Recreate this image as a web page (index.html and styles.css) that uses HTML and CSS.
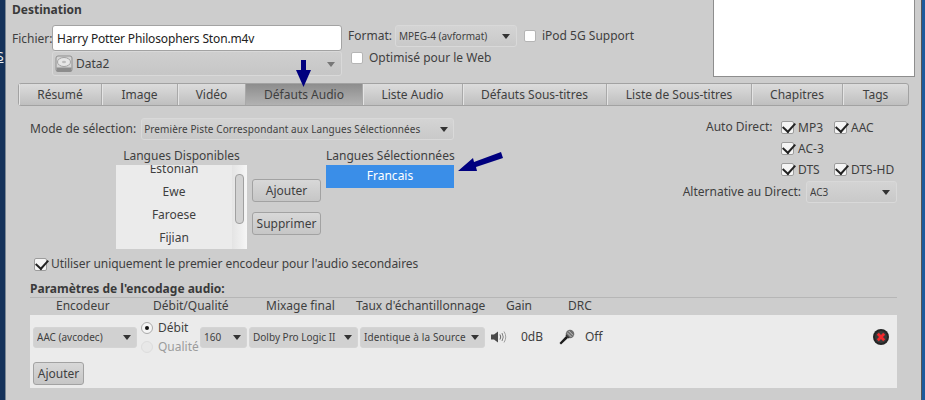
FILE: index.html
```html
<!DOCTYPE html>
<html lang="en">
<head>
	<meta charset="UTF-8">
	<title>Destination</title>
	<link rel="stylesheet" href="styles.css">
</head>
<body>
	<div class="desk"><span class="desk-s">S</span></div>
	<div class="win">
		<div class="top">
			<div class="dest">
				<div class="heading">Destination</div>
				<div class="dest-rows">
					<div class="file-col">
						<div class="file-row">
							<label class="file-lbl">Fichier:</label>
							<div class="entry">Harry Potter Philosophers Ston.m4v</div>
						</div>
						<div class="combo disk">
							<svg class="disk-ico" width="18" height="18" viewBox="0 0 18 18">
								<rect x="1" y="1" width="16" height="15.500" rx="2" fill="#d4d4d4" stroke="#8f8f8f"/>
								<ellipse cx="9" cy="7" rx="6.500" ry="4.500" fill="#e6e6e6" stroke="#a2a2a2"/>
								<ellipse cx="9" cy="7" rx="2" ry="1.300" fill="#bcbcbc"/>
								<rect x="1.500" y="12.500" width="15" height="4" fill="#8c8c8c"/>
							</svg>
							<span class="grow">Data2</span>
							<i class="caret light"></i>
						</div>
					</div>
					<div class="format-col">
						<div class="format-row">
							<span>Format:</span>
							<div class="combo format"><span class="grow">MPEG-4 (avformat)</span><i class="caret"></i></div>
							<span class="check"><i class="box"></i>iPod 5G Support</span>
						</div>
						<span class="check web"><i class="box"></i>Optimisé pour le Web</span>
					</div>
				</div>
			</div>
			<div class="preview"></div>
		</div>

		<div class="tabs">
			<div class="tab t1">Résumé</div>
			<div class="tab t2">Image</div>
			<div class="tab t3">Vidéo</div>
			<div class="tab t4 on">Défauts Audio</div>
			<div class="tab t5">Liste Audio</div>
			<div class="tab t6">Défauts Sous-titres</div>
			<div class="tab t7">Liste de Sous-titres</div>
			<div class="tab t8">Chapitres</div>
			<div class="tab t9">Tags</div>
		</div>

		<div class="middle">
			<div class="left">
				<div class="mode">
					<span>Mode de sélection:</span>
					<div class="combo mode-combo"><span class="grow">Première Piste Correspondant aux Langues Sélectionnées</span><i class="caret"></i></div>
				</div>
				<div class="langs">
					<div class="avail">
						<div class="lang-head">Langues Disponibles</div>
						<div class="list">
							<div class="list-items">
								<div class="cut">Estonian</div>
								<div>Ewe</div>
								<div>Faroese</div>
								<div>Fijian</div>
							</div>
							<div class="scroll"><i></i></div>
						</div>
					</div>
					<div class="lang-btns">
						<div class="btn add">Ajouter</div>
						<div class="btn del">Supprimer</div>
					</div>
					<div class="chosen">
						<div class="lang-head">Langues Sélectionnées</div>
						<div class="sel">Francais</div>
					</div>
				</div>
			</div>
			<div class="right">
				<div class="auto">
					<span class="auto-lbl">Auto Direct:</span>
					<div class="auto-grid">
						<span class="check"><i class="box ticked"></i>MP3</span>
						<span class="check"><i class="box ticked"></i>AAC</span>
						<span class="check wide"><i class="box ticked"></i>AC-3</span>
						<span class="check"><i class="box ticked"></i>DTS</span>
						<span class="check"><i class="box ticked"></i>DTS-HD</span>
					</div>
				</div>
				<div class="fallback">
					<span>Alternative au Direct:</span>
					<div class="combo ac3"><span class="grow">AC3</span><i class="caret"></i></div>
				</div>
			</div>
		</div>

		<div class="check only"><i class="box ticked"></i>Utiliser uniquement le premier encodeur pour l'audio secondaires</div>

		<div class="params">
			<div class="heading params-head">Paramètres de l'encodage audio:</div>
			<div class="cols">
				<span class="c1">Encodeur</span>
				<span class="c2">Débit/Qualité</span>
				<span class="c3">Mixage final</span>
				<span class="c4">Taux d'échantillonnage</span>
				<span class="c5">Gain</span>
				<span class="c6">DRC</span>
			</div>
			<div class="panel">
				<div class="track">
					<div class="combo flat w-enc"><span class="grow">AAC (avcodec)</span><i class="caret"></i></div>
					<div class="radios">
						<span class="radio"><i class="dot on-dot"></i>Débit</span>
						<span class="radio off"><i class="dot"></i>Qualité</span>
					</div>
					<div class="combo flat w-rate"><span class="grow">160</span><i class="caret"></i></div>
					<div class="combo flat w-mix"><span class="grow">Dolby Pro Logic II</span><i class="caret"></i></div>
					<div class="combo flat w-samp"><span class="grow">Identique à la Source</span><i class="caret"></i></div>
					<svg class="vol" width="16" height="14" viewBox="0 0 16 14">
						<path d="M0 4.500h3L7 1.500v11L3 9.500H0z" fill="#4a4a4a"/>
						<path d="M9 4.500q1.500 2.500 0 5" fill="none" stroke="#666" stroke-width="1"/>
						<path d="M11 3q2.500 4 0 8" fill="none" stroke="#808080" stroke-width="1"/>
						<path d="M13 1.500q3.500 5.500 0 11" fill="none" stroke="#a0a0a0" stroke-width="1"/>
					</svg>
					<span class="gain">0dB</span>
					<svg class="mic" width="16" height="16" viewBox="0 0 16 16">
						<path d="M.5 14L7.500 6.500 9.500 8.500 2 15.500z" fill="#1c1c1c"/>
						<circle cx="11" cy="5" r="4.300" fill="#6e6e6e"/>
						<path d="M8 3.500l4.500 4.500M9.500 1.800l4.700 4.700" stroke="#c4c4c4" stroke-width="1"/>
						<path d="M7 6l3 3" stroke="#333" stroke-width="1.500"/>
					</svg>
					<span class="drc">Off</span>
					<svg class="remove" width="16" height="16" viewBox="0 0 16 16">
						<circle cx="8" cy="8" r="8" fill="#242424"/>
						<circle cx="8" cy="8" r="6" fill="#3a3a3a"/>
						<path d="M4.800 4.800l6.400 6.400M11.200 4.800l-6.400 6.400" stroke="#f4282c" stroke-width="2.800"/>
					</svg>
				</div>
				<div class="btn add-track">Ajouter</div>
			</div>
		</div>

		<!-- annotation arrows drawn over the screenshot -->
		<svg class="arrow-down" width="15" height="27" viewBox="0 0 15 27">
			<path d="M5 0h5v10h5L7.500 27 0 10h5z" fill="#00007f"/>
		</svg>
		<svg class="arrow-side" width="45" height="20" viewBox="0 0 45 20">
			<path d="M0 19L15 6l1 4L43 0l2 6-27 9 1 4z" fill="#00007f"/>
		</svg>
	</div>
	<div class="edge"></div>
</body>
</html>
```

FILE: styles.css
```css
*{margin:0;padding:0;box-sizing:border-box;}
body{
	width:925px;
	height:400px;
	overflow:hidden;
	display:flex;
	background:#cdcdcd;
	font-family:"Noto Sans",sans-serif;
	font-size:12px;
	line-height:16px;
	color:#3f3f3f;
}
.desk{
	width:6px;
	background:#14325a;
	border-right:1px solid #7a8794;
	overflow:hidden;
	position:relative;
}
.desk-s{
	position:absolute;
	left:-3px;
	top:49px;
	color:#eee;
	font-size:12px;
	text-decoration:underline;
}
.edge{
	width:4px;
	background:#1d5a9c;
	border-left:1px solid #555;
}
.win{
	width:915px;
	position:relative;
	display:flex;
	flex-direction:column;
}
.grow{flex:1;white-space:nowrap;overflow:hidden;}
.heading{
	font-weight:700;
	color:#3a3a3a;
}

/* top */
.top{
	height:83px;
	display:flex;
}
.dest{
	width:708px;
	padding-left:6px;
	padding-top:2px;
}
.dest-rows{
	display:flex;
	margin-top:7px;
}
.file-col{
	width:331px;
}
.file-row{
	display:flex;
	align-items:center;
}
.file-lbl{width:41px;padding-top:1px;}
.entry{
	width:290px;
	margin-left:-1px;
	height:26px;
	background:#fff;
	border:1px solid #a3a3a3;
	border-radius:3px;
	padding:5px 4px 0;
	color:#222;
	letter-spacing:-.15px;
}
.combo{
	display:flex;
	align-items:center;
	background:linear-gradient(#d4d4d4,#c9c9c9);
	border:1px solid #d9d9d9;
	border-radius:3px;
	font-size:10px;
}
.caret{
	width:0;
	height:0;
	border-left:4.5px solid transparent;
	border-right:4.5px solid transparent;
	border-top:5px solid #333;
	flex:none;
}
.caret.light{border-top-color:#777;}
.disk{
	margin-left:40px;
	width:290px;
	height:25px;
	font-size:12px;
	padding:1px 6px 0 2px;
	background:linear-gradient(#cfcfcf,#c6c6c6);
}
.disk-ico{margin-right:3px;}
.format-col{
	margin-left:5px;
	display:flex;
	flex-direction:column;
}
.format-row{
	display:flex;
	align-items:center;
	height:22px;
}
.format{
	width:122px;
	height:22px;
	margin-left:3px;
	padding:0 6px 0 3px;
}
.check{
	display:inline-flex;
	align-items:center;
	white-space:nowrap;
}
.format-row .check{margin-left:7px;}
.web{margin:3px 0 0 3px;}
.box{
	width:12px;
	height:12px;
	background:#fff;
	border:1px solid #b5b5b5;
	border-radius:2px;
	margin-right:6px;
	flex:none;
	position:relative;
}
.ticked{
	width:13px;
	height:13px;
	background:#f4f4f4;
	border-color:#9c9c9c;
}
.ticked::after{
	content:"";
	position:absolute;
	left:3px;
	top:-2px;
	width:6px;
	height:10px;
	border:solid #222;
	border-width:0 2px 2px 0;
	transform:rotate(42deg);
}
.preview{
	width:202px;
	height:77px;
	background:#fff;
	border:1px solid #8e8e8e;
	border-top:0;
	margin-left:-1px;
}

/* tabs */
.tabs{
	display:flex;
	margin-left:12px;
	height:23px;
	width:891px;
	background:linear-gradient(#dcdcdc,#bfbfbf);
	border:1px solid #a2a2a2;
	border-radius:3px;
}
.tab{
	text-align:center;
	line-height:21px;
	border-right:1px solid #a9a9a9;
	box-shadow:inset 1px 0 0 #e4e4e4;
	white-space:nowrap;
}
.tab:last-child{border-right:0;}
.t1{width:83px;}
.t2{width:76px;}
.t3{width:68px;}
.t4{width:117px;}
.t5{width:100px;}
.t6{width:144px;}
.t7{width:145px;}
.t8{width:91px;}
.t9{flex:1;}
.on{
	background:linear-gradient(#8d8d8d,#b2b2b2);
	box-shadow:none;
}

/* middle */
.middle{
	display:flex;
	justify-content:space-between;
	height:143px;
}
.left{
	padding:12px 0 0 24px;
}
.mode{
	display:flex;
	align-items:center;
}
.mode-combo{
	width:313px;
	height:22px;
	margin-left:5px;
	padding:0 5px 0 2px;
	letter-spacing:.1px;
}
.langs{
	display:flex;
	margin:8px 0 0 86px;
}
.avail{width:131px;}
.lang-head{
	text-align:center;
	white-space:nowrap;
	line-height:16px;
}
.list{
	display:flex;
	width:131px;
	height:84px;
	margin-top:1px;
	background:#ebebeb;
	overflow:hidden;
}
.list-items{
	width:116px;
	margin-top:-8px;
	text-align:center;
}
.list-items div{height:23px;line-height:23px;}
.scroll{
	width:15px;
	background:linear-gradient(90deg,#e4e4e4,#f6f6f6);
	padding:9px 0 0 3px;
}
.scroll i{
	display:block;
	width:9px;
	height:50px;
	border:1px solid #a0a0a0;
	border-radius:4px;
	background:#d2d2d2;
}
.lang-btns{
	width:69px;
	margin-left:5px;
	padding-top:31px;
}
.btn{
	background:linear-gradient(#d8d8d8,#c6c6c6);
	border:1px solid #a2a2a2;
	border-radius:3px;
	text-align:center;
	line-height:21px;
	height:23px;
}
.del{margin-top:10px;}
.chosen{
	width:128px;
	margin-left:5px;
}
.sel{
	background:#3a8ee8;
	color:#fff;
	text-align:center;
	height:23px;
	line-height:22px;
	margin-top:1px;
}
.right{
	padding:11px 24px 0 0;
	width:260px;
	display:flex;
	flex-direction:column;
	align-items:flex-end;
}
.auto{
	display:flex;
	width:191px;
}
.auto-lbl{width:75px;padding-top:2px;white-space:nowrap;}
.auto-grid{
	display:grid;
	grid-template-columns:53px 63px;
	grid-auto-rows:21px;
	align-items:center;
}
.auto-grid .box{margin-right:4px;}
.wide{grid-column:1 / 3;}
.fallback{
	display:flex;
	align-items:center;
	margin-top:1px;
}
.ac3{
	width:91px;
	height:22px;
	margin-left:5px;
	padding:0 6px 0 3px;
}

/* audio params */
.only{
	margin:5px 0 0 28px;
	height:20px;
	display:flex;
	letter-spacing:-.06px;
}
.only .box{margin-right:4px;}
.params{
	margin:7px 0 0 24px;
	width:867px;
}
.params-head{line-height:16px;}
.cols{
	height:18px;
	border-top:1px solid #b6b6b6;
	display:flex;
	white-space:nowrap;
}
.c1{margin-left:26px;width:97px;}
.c2{width:113px;}
.c3{width:90px;}
.c4{width:150px;}
.c5{width:62px;}
.c6{width:40px;}
.panel{
	height:73px;
	background:#ebebeb;
	padding:6px 4px 0 3px;
}
.track{
	display:flex;
	align-items:center;
	height:32px;
}
.flat{
	height:21px;
	background:#d1d1d1;
	border-color:#d4d4d4;
	padding:0 5px 0 3px;
}
.w-enc{width:104px;}
.radios{
	width:57px;
	margin-left:4px;
	display:flex;
	flex-direction:column;
}
.radio{
	display:flex;
	align-items:center;
	height:19px;
	white-space:nowrap;
}
.radio.off{color:#9c9c9c;}
.dot{
	width:12px;
	height:12px;
	border-radius:50%;
	background:#f5f5f5;
	border:1px solid #aaa;
	margin-right:5px;
	position:relative;
	flex:none;
}
.off .dot{border-color:#ddd;background:#e8e8e8;}
.on-dot::after{
	content:"";
	position:absolute;
	left:3px;
	top:3px;
	width:4px;
	height:4px;
	border-radius:50%;
	background:#111;
}
.w-rate{width:47px;margin-left:2px;}
.w-mix{width:109px;margin-left:2px;}
.w-samp{width:125px;margin-left:2px;letter-spacing:.12px;}
.vol{margin-left:6px;flex:none;}
.gain{width:36px;text-align:right;}
.mic{margin-left:16px;flex:none;}
.drc{margin-left:10px;flex:1;}
.remove{margin-right:4px;flex:none;}
.add-track{
	width:51px;
	margin-top:9px;
}

/* arrows lie over the tabs and the list */
.arrow-down{
	position:absolute;
	left:290px;
	top:60px;
}
.arrow-side{
	position:absolute;
	left:452px;
	top:152px;
}
```
